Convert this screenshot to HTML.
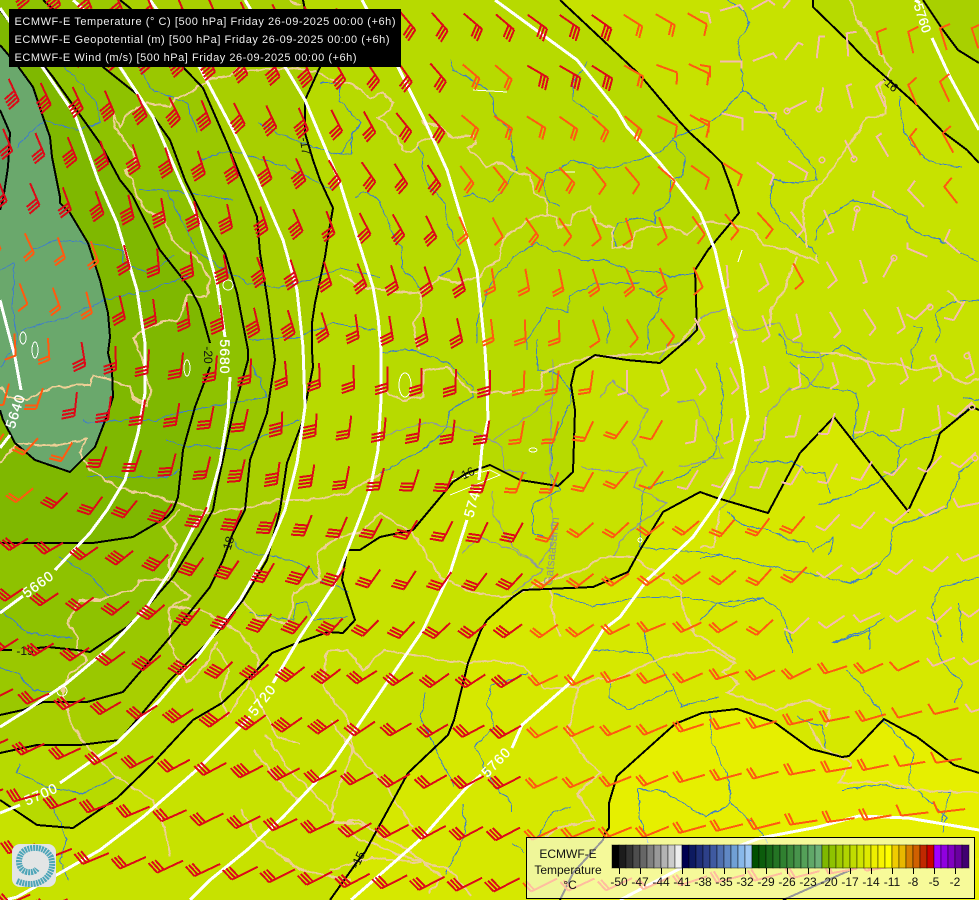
<!DOCTYPE html>
<html><head><meta charset="utf-8"><title>ECMWF-E 500 hPa</title>
<style>
html,body{margin:0;padding:0;background:#c8e300;width:979px;height:900px;overflow:hidden}
svg{display:block;font-family:"Liberation Sans",sans-serif}
.blk{fill:none;stroke:#000;stroke-width:2}
.wht{fill:none;stroke:#fff;stroke-width:3}
.tan{fill:none;stroke:#edcf95;stroke-width:2}
.riv{fill:none;stroke:#4180c4;stroke-width:1}
.gry{fill:none;stroke:#8d9a9c;stroke-width:1.2}
.lk{fill:none;stroke:#fff;stroke-width:1}
.wl{fill:#fff;font-size:14px;letter-spacing:1px;stroke:#fff;stroke-width:.3;text-anchor:middle}
.bl{fill:#111;font-size:12px;text-anchor:middle}
.tt{fill:#eee;font-size:11px}
.lg{fill:#111;font-size:12px;text-anchor:middle}
</style></head><body>
<svg id="m" xmlns="http://www.w3.org/2000/svg" width="979" height="900" viewBox="0 0 979 900">
<defs>
<filter id="w" filterUnits="userSpaceOnUse" x="0" y="0" width="979" height="900" color-interpolation-filters="sRGB">
<feTurbulence type="fractalNoise" baseFrequency=".11" numOctaves="2" seed="4"/>
<feDisplacementMap in="SourceGraphic" scale="5" xChannelSelector="R" yChannelSelector="G"/>
</filter>
</defs>
<g shape-rendering="crispEdges">
<rect width="979" height="900" fill="#d6e800"/>
<polygon fill="#c7e200" points="330,900 357,862 365,852 408,773 448,735 454,720 468,663 481,630 487,620 513,597 523,590 593,587 628,572 640,550 663,512 700,492 717,498 768,513 800,453 834,417 908,511 932,460 940,433 972,407 979,410 979,0 0,0 0,900"/>
<polygon fill="#e6ef00" points="560,900 573,873 603,840 605,833 609,828 609,803 617,776 675,724 702,713 737,709 774,722 811,749 842,757 849,756 884,719 917,737 954,765 979,773 979,900"/>
<polygon fill="#ecf200" points="783,900 855,868 979,858 979,900"/>
<polygon fill="#b7da00" points="0,800 37,825 73,828 117,798 153,763 193,720 222,703 257,670 272,653 297,643 328,632 343,633 355,620 342,580 347,550 360,550 380,537 413,530 453,482 467,473 490,465 520,480 558,486 573,472 575,410 571,385 575,368 595,355 627,360 660,363 687,340 697,330 695,270 708,250 739,213 732,190 722,163 712,153 690,133 678,120 640,75 560,0 0,0"/>
<polygon fill="#b7da00" points="813,0 813,7 847,40 863,57 880,72 917,105 943,132 967,150 979,163 979,0"/>
<polygon fill="#a8d000" points="923,0 943,30 958,50 979,63 979,0"/>
<polygon fill="#a8cf00" points="303,0 305,10 322,60 320,67 305,100 305,133 313,160 320,180 333,208 328,237 325,257 315,303 312,323 312,350 313,367 307,397 302,423 287,463 280,510 267,560 243,600 217,633 170,680 120,740 80,745 37,745 0,753 0,0"/>
<polygon fill="#9ac800" points="120,0 130,8 183,67 203,88 227,143 242,180 257,217 260,253 268,303 275,360 267,413 250,460 245,510 233,533 223,560 210,587 170,637 123,692 87,702 43,702 23,710 0,715 0,0"/>
<polygon fill="#8ec200" points="43,0 52,8 103,67 138,95 170,140 185,180 203,217 225,253 237,293 248,350 248,360 233,413 217,487 213,510 200,533 173,577 147,607 127,627 90,652 77,650 48,647 37,648 0,650 0,0"/>
<polygon fill="#7fb800" points="0,10 53,77 100,143 120,180 132,195 160,250 190,288 200,307 210,343 210,367 195,407 183,450 178,497 173,510 167,517 133,537 93,543 47,543 0,543"/>
<polygon fill="#6aa86c" points="0,45 17,65 33,87 43,117 50,137 52,157 60,197 60,203 70,213 88,243 100,280 108,313 110,337 108,353 112,370 113,397 108,413 95,447 70,472 35,460 15,443 3,420 0,410"/>
<polygon fill="#5f9f64" points="0,110 10,133 8,167 3,200 0,210"/>

<g filter="url(#w)">
<!-- rivers -->
<g class="riv">
<polyline points="728,0 743,10 750,23 738,40 742,67 743,90 723,113 700,128 673,138 663,150 647,157 613,167 603,168 570,160 560,170 547,173 543,185 550,203 560,207"/>
<polyline points="743,90 767,110 780,127 800,150 815,170 817,180 793,183 773,180 770,203 780,220 803,240 818,257"/>
<polyline points="815,240 817,230 827,217 853,200 887,208 907,217 910,230 940,240 970,258 979,262"/>
<polyline points="900,97 902,122 910,143 930,162 962,167"/>
<polyline points="0,270 15,263 12,307 18,340 0,367"/>
<polyline points="33,250 57,240 90,243 123,250 123,263 150,273 175,255"/>
<polyline points="20,330 60,320 105,300 150,290 190,275"/>
<polyline points="83,420 87,423 133,420 157,420 173,413 233,403 267,397 260,380 250,365"/>
<polyline points="167,440 187,447 200,445 240,450 267,433 300,420"/>
<polyline points="87,477 133,477 167,477 180,470"/>
<polyline points="250,340 300,337 333,323 377,330"/>
<polyline points="143,190 167,190 197,252 220,267 247,283 277,287 310,280 340,268 380,277"/>
<polyline points="65,67 97,103 100,123 77,130 43,120 17,147"/>
<polyline points="140,67 152,90 187,103 197,133"/>
<polyline points="257,123 293,140 340,155 360,123 340,100 340,83 320,83"/>
<polyline points="200,160 230,150 287,167 333,190"/>
<polyline points="140,190 167,190 233,200"/>
<polyline points="233,543 247,553 263,555 293,560 310,570 323,583 350,592"/>
<polyline points="250,613 263,615 293,620 297,603 307,603 313,620 347,617"/>
<polyline points="0,667 17,673 33,690 53,693"/>
<polyline points="20,763 17,773 47,787 83,793 117,777"/>
<polyline points="60,557 87,573 110,597"/>
<polyline points="0,610 27,633 73,638"/>
<polyline points="50,800 67,840 60,860 68,880"/>
<polyline points="450,60 453,70 480,85 493,97 493,113 510,130 512,153 517,170 500,193 490,203 473,192 463,197"/>
<polyline points="588,62 573,83 573,100 597,117"/>
<polyline points="673,140 685,157 682,177 670,180 670,203 655,213 655,223 637,218 617,223 613,237 617,247"/>
<polyline points="340,100 360,123 352,135 352,153 340,155"/>
<polyline points="417,145 423,155 422,167 427,183 445,203 448,227 460,250 457,263 440,277"/>
<polyline points="355,197 363,192 377,197 383,210 395,240 402,247 402,267 420,287"/>
<polyline points="697,273 670,277 663,273 637,270 633,272 603,260 580,260 567,253 553,252 537,242 513,257 507,267 497,273 487,292 477,323 477,343"/>
<polyline points="640,283 600,283 570,295 567,312 547,308 540,320 527,340 527,350"/>
<polyline points="640,288 662,298 657,313 648,327 647,350"/>
<polyline points="603,307 610,323 607,343"/>
<polyline points="380,353 413,350 447,363 473,387 473,397 450,410 447,427 423,450 380,473"/>
<polyline points="537,340 537,370 557,373 573,393 553,443 550,473 560,490 533,503 533,533 553,540"/>
<polyline points="717,363 723,390 720,427 713,457 680,477 660,483 643,490 640,547 680,550 722,555"/>
<polyline points="553,593 593,607 637,597 687,597 733,607 763,598 780,610 793,643"/>
<polyline points="935,313 953,302 979,300"/><polyline points="935,313 940,332 937,343"/>
<polyline points="912,327 923,328 912,350 912,368"/>
<polyline points="780,333 787,353 800,358 823,357 843,345 867,360"/>
<polyline points="790,362 813,385 857,393 857,407 853,440 873,430 900,447 897,470 867,487 840,498 818,505"/>
<polyline points="900,447 940,433 970,408"/><polyline points="963,398 979,400"/>
<polyline points="750,462 793,462 807,473 825,473 830,493"/>
<polyline points="975,460 960,473 947,508 893,527 890,553 867,577 850,583 817,575 747,562 722,555 700,558"/>
<polyline points="727,512 743,525 767,530 793,540 808,543 813,552 833,538 828,555"/>
<polyline points="700,620 717,603 763,598"/>
<polyline points="979,577 940,587 932,607 940,637"/><polyline points="958,603 963,643"/>
<polyline points="833,642 870,628 870,650"/><polyline points="870,628 885,618"/>
<polyline points="644,630 648,653 661,667 673,687 681,707 718,697"/>
<polyline points="594,650 648,653"/>
<polyline points="611,680 609,697 628,710 673,690"/>
<polyline points="710,713 712,743 727,773 731,803 706,817 661,790 638,790 640,817 648,843"/>
<polyline points="731,803 760,830 768,843"/>
<polyline points="832,643 871,630"/>
<polyline points="847,670 880,710 884,720 913,753 909,783 946,817 942,833"/>
<polyline points="933,630 942,663 962,683 954,703"/>
<polyline points="785,630 793,653"/>
<polyline points="797,717 822,727 826,750"/>
<polyline points="842,790 875,785 950,793 942,823"/>
<polyline points="425,693 421,717 433,743 454,787"/>
<polyline points="528,673 491,687 487,703 495,727 475,747 495,787 512,803 512,813"/>
<polyline points="462,803 466,833 446,873"/>
<polyline points="537,837 553,812 570,807"/>
<polyline points="512,843 524,852"/>
</g>
<!-- grey admin -->
<g class="gry">
<polyline points="380,437 423,423 473,430 503,447 503,470 527,473"/>
<polyline points="493,440 523,420 557,393"/>
<polyline points="580,467 623,473 643,467 633,487 667,503 623,537 613,557"/>
<polyline points="600,397 613,380 647,410 633,443 647,467"/>
<polyline points="680,467 723,457 693,400 677,402"/>
<polyline points="493,490 493,513 513,547 540,567"/>
<polyline points="462,553 480,537 513,550 543,570 513,593"/>
<polyline points="553,360 550,470 553,540 540,565"/>
<polyline points="780,323 787,340 802,343 803,353 820,353 823,368 807,388 787,390 773,407 765,417 763,438 753,453 740,477 733,497 720,510"/>
<polyline points="700,318 727,308 742,332 780,323"/>
<polyline points="660,360 667,345 690,340 700,318"/>
</g>
<!-- borders -->
<g class="tan">
<polyline points="113,113 120,127 127,113 140,107 147,103 170,107 175,98 190,93 203,83 213,78 230,77 237,70 250,70 290,68 317,72 333,80 352,85 363,92 370,98 383,93 393,102 390,110 378,118 387,125 397,137 403,150 412,152 420,142 433,138 423,122 440,127 453,138 473,135 477,143 468,148 478,158 487,167 497,162 517,173 530,175 533,193 545,198 549,215 557,217 558,227 570,225 573,215 590,207 597,223 613,228 612,247 630,248 635,233 648,227 673,227 687,235 697,225 713,222 733,225 753,230 763,245 780,248 818,262 816,255"/>
<polyline points="549,215 533,217 520,227 503,238 500,260 487,267 480,277 457,283 440,278 420,293 403,292 383,290 360,287 340,275"/>
<polyline points="420,293 422,310 413,323 415,337 420,350"/>
<polyline points="290,0 300,5"/>
<polyline points="113,113 115,127 123,140 133,150 135,163 125,170 132,180 137,197 147,213 163,217 173,240 183,250 197,257 210,280 207,297 187,295 183,310 177,320 157,323 133,338 143,357 145,375 152,390 147,407 133,397 130,387 110,380 93,375 90,385 52,387 43,392 27,400 7,397 0,387"/>
<polyline points="0,463 17,443 37,445 57,445 87,440 80,453 90,470 117,487 150,495 177,503 207,513 250,507 277,500 310,500 347,493 380,473"/>
<polyline points="180,510 163,527 177,543 170,560 170,580 140,580 133,590 100,600 80,600 68,623 78,637 77,650 87,660 80,667 70,673 63,690 70,723 90,750 117,777 153,800 163,823 170,857"/>
<polyline points="170,580 190,597 170,607 170,643 180,667 188,683 207,663 217,643"/>
<polyline points="170,607 200,610 240,633 260,660 253,677 233,707 227,717"/>
<polyline points="217,647 230,670 220,693 227,713"/>
<polyline points="250,687 267,717 277,737 300,743"/>
<polyline points="253,750 287,790 300,800"/>
<polyline points="265,735 290,770 310,790 335,815"/>
<polyline points="243,600 257,617 287,623 293,607 293,593 320,580 317,553 333,540 363,530 380,513 413,533 440,577 473,593 513,597 540,583 583,570 600,557 633,557 680,590 683,610 697,637"/>
<polyline points="327,650 323,687 347,717 353,750 347,767 333,803 333,823 350,823 370,827"/>
<polyline points="327,650 347,650 363,670 384,650 442,660 466,663 495,660 524,667 545,688 578,687 568,733 586,760 601,773 578,793 594,820 561,827 545,837"/>
<polyline points="330,823 359,820 380,837 404,847 442,877 429,893"/><polyline points="330,870 371,857 421,863"/>
<polyline points="330,720 355,753 384,783 413,827"/>
<polyline points="578,687 599,677 611,682 661,657 714,650 735,663 723,673 739,683 727,693 760,703 776,710 809,700 830,710 826,727"/>
<polyline points="809,723 822,747 851,763 838,783 884,782 917,790 978,793"/>
<polyline points="690,630 735,660"/>
<polyline points="380,390 403,400 423,397 423,370 447,367 470,392 513,392 540,390 543,373 560,365 590,357 627,355 657,353 680,343 700,318"/>
<polyline points="550,590 553,613 560,637"/>
<polyline points="820,353 837,353 867,362 900,365 917,370 940,365 960,383 979,380"/>
<polyline points="770,327 772,307 783,293"/><polyline points="947,292 963,305"/>
<polyline points="720,510 713,547 700,547"/>
<polyline points="797,257 783,293"/>
<polyline points="803,203 827,177 857,133 867,118 885,115 885,103 880,87 890,70 873,40 857,20 850,0"/>
<polyline points="803,203 807,247"/>
<polyline points="240,810 260,840 300,870 350,880"/>
<polyline points="340,830 400,855 450,870 470,895"/>
</g>
</g>
<!-- lakes -->
<g class="lk">
<ellipse cx="23" cy="338" rx="3" ry="6"/><ellipse cx="35" cy="350" rx="3" ry="8"/><ellipse cx="187" cy="368" rx="3" ry="8"/>
<ellipse cx="405" cy="385" rx="6" ry="12"/><ellipse cx="533" cy="450" rx="4" ry="2"/><ellipse cx="228" cy="285" rx="5" ry="5"/>
<ellipse cx="640" cy="540" rx="2" ry="2"/><ellipse cx="62" cy="691" rx="5" ry="5"/><polyline points="450,480 490,470 500,475 450,495"/>
<polyline points="742,250 738,262"/><polyline points="565,172 575,172"/><polyline points="473,90 507,92"/>
</g>
<!-- temperature contours -->
<g class="blk">
<polyline points="330,900 357,862 365,852 408,773 448,735 454,720 468,663 481,630 487,620 513,597 523,590 593,587 628,572 640,550 663,512 700,492 717,498 768,513 800,453 834,417 908,511 932,460 940,433 972,407 979,410"/>
<polyline points="560,900 573,873 603,840 605,833 609,828 609,803 617,776 675,724 702,713 737,709 774,722 811,749 842,757 849,756 884,719 917,737 954,765 979,773"/>
<polyline points="783,900 855,868"/>
<polyline points="0,800 37,825 73,828 117,798 153,763 193,720 222,703 257,670 272,653 297,643 328,632 343,633 355,620 342,580 347,550 360,550 380,537 413,530 453,482 467,473 490,465 520,480 558,486 573,472 575,410 571,385 575,368 595,355 627,360 660,363 687,340 697,330 695,270 708,250 739,213 732,190 722,163 712,153 690,133 678,120 640,75 560,0"/>
<polyline points="813,0 813,7 847,40 863,57 880,72 917,105 943,132 967,150 979,163"/>
<polyline points="923,0 943,30 958,50 979,63"/>
<polyline points="303,0 305,10 322,60 320,67 305,100 305,133 313,160 320,180 333,208 328,237 325,257 315,303 312,323 312,350 313,367 307,397 302,423 287,463 280,510 267,560 243,600 217,633 170,680 120,740 80,745 37,745 0,753"/>
<polyline points="120,0 130,8 183,67 203,88 227,143 242,180 257,217 260,253 268,303 275,360 267,413 250,460 245,510 233,533 223,560 210,587 170,637 123,692 87,702 43,702 23,710 0,715"/>
<polyline points="43,0 52,8 103,67 138,95 170,140 185,180 203,217 225,253 237,293 248,350 248,360 233,413 217,487 213,510 200,533 173,577 147,607 127,627 90,652 77,650 48,647 37,648"/><polyline points="12,650 0,650"/>
<polyline points="0,10 53,77 100,143 120,180 132,195 160,250 190,288 200,307 210,343"/><polyline points="210,367 195,407 183,450 178,497 173,510 167,517 133,537 93,543 47,543 0,543"/>
<polyline points="0,45 17,65 33,87 43,117 50,137 52,157 60,197 60,203 70,213 88,243 100,280 108,313 110,337 108,353 112,370 113,397 108,413 95,447 70,472 35,460 15,443 3,420 0,410"/>
<polyline points="0,110 10,133 8,167 3,200 0,210"/>
</g>
<!-- geopotential -->
<g class="wht">
<polyline points="0,300 7,327 15,357 21,390"/><polyline points="10,435 0,448"/>
<polyline points="0,8 43,68 75,115 98,180 117,223 137,290 145,343 145,393 138,433 125,480 107,510 90,533 55,570"/><polyline points="23,596 0,613"/>
<polyline points="73,0 82,8 120,67 153,117 180,180 200,223 217,283 225,337"/><polyline points="230,377 228,413 220,463 207,510 193,528 173,567 147,607 110,647 67,683 27,710 0,727"/>
<polyline points="150,0 200,68 233,130 257,180 283,240 297,290 303,347 305,407 297,463 285,510 267,553 240,600 200,653 160,700 117,743 60,783"/><polyline points="20,805 0,813"/>
<polyline points="245,0 287,70 305,100 340,183 357,237 373,287 378,317 381,350 381,400 378,450 370,490 363,510 333,587 300,637 273,683"/><polyline points="250,717 200,767 143,817 100,850 60,873 17,897 5,900"/>
<polyline points="362,0 398,67 423,117 447,170 460,213 477,270 485,350 487,383 488,420 482,447 479,480"/><polyline points="467,520 450,573 423,630 384,687 330,767 283,817 247,850 210,880 190,900"/>
<polyline points="495,0 577,60 617,110 627,127 660,163 700,213 715,250 724,290 733,330 742,367 748,417 733,473 717,503 693,537 647,580 620,617 603,630 570,683 522,725 512,748"/><polyline points="481,775 466,788 423,837 351,900"/>
<polyline points="932,38 950,77 979,130"/><polyline points="915,0 920,3"/>
<polyline points="620,900 681,868 760,838 818,827 859,816 908,818 979,830"/>
</g>
</g>
<text class="bl" transform="translate(208,355) rotate(90)" dy="4">-20</text>
<text class="bl" transform="translate(228,545) rotate(-72)" dy="4">-18</text>
<text class="bl" x="25" y="655">-19</text>
<text class="bl" transform="translate(466,474) rotate(-25)" dy="4">-16</text>
<text class="bl" transform="translate(890,84) rotate(42)" dy="4">-16</text>
<text class="bl" transform="translate(305,146) rotate(82)" dy="4">-17</text>
<text class="bl" transform="translate(358,860) rotate(-65)" dy="4">-15</text>
<text fill="#8a9294" font-size="12" transform="translate(552,586) rotate(-84)">Gatsaasarun</text>
<text class="wl" transform="translate(15,411) rotate(-72)" dy="5">5640</text>
<text class="wl" transform="translate(38,584) rotate(-36)" dy="5">5660</text>
<text class="wl" transform="translate(225,357) rotate(90)" dy="5">5680</text>
<text class="wl" transform="translate(41,794) rotate(-24)" dy="5">5700</text>
<text class="wl" transform="translate(262,700) rotate(-52)" dy="5">5720</text>
<text class="wl" transform="translate(473,500) rotate(-74)" dy="5">5740</text>
<text class="wl" transform="translate(496,762) rotate(-46)" dy="5">5760</text>
<text class="wl" transform="translate(923,18) rotate(72)" dy="5" style="font-size:13px;letter-spacing:.3px">5760</text>
<g id="barbs" fill="none" stroke-width="2" shape-rendering="crispEdges"></g>

<!-- title -->
<rect x="9" y="9" width="392" height="58" fill="#000"/>
<text class="tt" x="14.5" y="25" textLength="381" lengthAdjust="spacing">ECMWF-E Temperature (° C) [500 hPa] Friday 26-09-2025 00:00 (+6h)</text>
<text class="tt" x="14.5" y="43" textLength="375" lengthAdjust="spacing">ECMWF-E Geopotential (m) [500 hPa] Friday 26-09-2025 00:00 (+6h)</text>
<text class="tt" x="14.5" y="61" textLength="342" lengthAdjust="spacing">ECMWF-E Wind (m/s) [500 hPa] Friday 26-09-2025 00:00 (+6h)</text>

<!-- logo -->
<rect x="12" y="844" width="44" height="43" rx="8" fill="#e2e5e5"/>
<path d="M17 881Q33 888 45 879Q55 870 51 857Q45 847 33 848Q20 849 19 861Q19 870 27 872Q34 873 37 869" fill="none" stroke="#4da5b8" stroke-width="6" stroke-dasharray="2 .8"/>

<!-- legend -->
<rect x="526.500" y="837.500" width="448" height="61" fill="#fff" fill-opacity=".6" stroke="#000"/>
<g stroke="#000" stroke-opacity=".45" stroke-width="1">
<rect x="612" y="845" width="7" height="23" fill="#000"/><rect x="619" y="845" width="7" height="23" fill="#1c1c1c"/><rect x="626" y="845" width="7" height="23" fill="#333"/><rect x="633" y="845" width="7" height="23" fill="#4d4d4d"/><rect x="640" y="845" width="7" height="23" fill="#666"/><rect x="647" y="845" width="7" height="23" fill="#808080"/><rect x="654" y="845" width="7" height="23" fill="#999"/><rect x="661" y="845" width="7" height="23" fill="#b3b3b3"/><rect x="668" y="845" width="7" height="23" fill="#ccc"/><rect x="675" y="845" width="7" height="23" fill="#eee"/>
<rect x="682" y="845" width="7" height="23" fill="#00004f"/><rect x="689" y="845" width="7" height="23" fill="#0d1a60"/><rect x="696" y="845" width="7" height="23" fill="#1f2f78"/><rect x="703" y="845" width="7" height="23" fill="#2d4089"/><rect x="710" y="845" width="7" height="23" fill="#3f5aa0"/><rect x="717" y="845" width="7" height="23" fill="#4f70b0"/><rect x="724" y="845" width="7" height="23" fill="#6088c4"/><rect x="731" y="845" width="7" height="23" fill="#70a0d4"/><rect x="738" y="845" width="7" height="23" fill="#88b8ea"/><rect x="745" y="845" width="7" height="23" fill="#a0c8f4"/>
<rect x="752" y="845" width="7" height="23" fill="#004f00"/><rect x="759" y="845" width="7" height="23" fill="#0c5c0c"/><rect x="766" y="845" width="7" height="23" fill="#186818"/><rect x="773" y="845" width="7" height="23" fill="#247424"/><rect x="780" y="845" width="7" height="23" fill="#308030"/><rect x="787" y="845" width="7" height="23" fill="#3c8a3c"/><rect x="794" y="845" width="7" height="23" fill="#48944c"/><rect x="801" y="845" width="7" height="23" fill="#54a058"/><rect x="808" y="845" width="7" height="23" fill="#60a868"/><rect x="815" y="845" width="7" height="23" fill="#6cb078"/>
<rect x="822" y="845" width="7" height="23" fill="#7fb800"/><rect x="829" y="845" width="7" height="23" fill="#8ec200"/><rect x="836" y="845" width="7" height="23" fill="#a0ca00"/><rect x="843" y="845" width="7" height="23" fill="#b0d400"/><rect x="850" y="845" width="7" height="23" fill="#c0dc00"/><rect x="857" y="845" width="7" height="23" fill="#cee400"/><rect x="864" y="845" width="7" height="23" fill="#deea00"/><rect x="871" y="845" width="7" height="23" fill="#eeef00"/><rect x="878" y="845" width="7" height="23" fill="#f8f400"/><rect x="885" y="845" width="7" height="23" fill="#ffff00"/>
<rect x="892" y="845" width="7" height="23" fill="#f0cc00"/><rect x="899" y="845" width="7" height="23" fill="#e8b800"/><rect x="906" y="845" width="7" height="23" fill="#d88000"/><rect x="913" y="845" width="7" height="23" fill="#d06000"/><rect x="920" y="845" width="7" height="23" fill="#c02800"/><rect x="927" y="845" width="7" height="23" fill="#cc0000"/>
<rect x="934" y="845" width="7" height="23" fill="#a000ff"/><rect x="941" y="845" width="7" height="23" fill="#9000e0"/><rect x="948" y="845" width="7" height="23" fill="#8000c0"/><rect x="955" y="845" width="7" height="23" fill="#6a00a0"/><rect x="962" y="845" width="7" height="23" fill="#400070"/>
</g>
<path d="M619.500 868v6M640.500 868v6M661.500 868v6M682.500 868v6M703.500 868v6M724.500 868v6M745.500 868v6M766.500 868v6M787.500 868v6M808.500 868v6M829.500 868v6M850.500 868v6M871.500 868v6M892.500 868v6M913.500 868v6M934.500 868v6M955.500 868v6" stroke="#000" fill="none"/>
<g class="lg">
<text x="568" y="858">ECMWF-E</text><text x="568" y="874">Temperature</text><text x="570" y="889">°C</text>
<text x="619" y="886">-50</text><text x="640" y="886">-47</text><text x="661" y="886">-44</text><text x="682" y="886">-41</text><text x="703" y="886">-38</text><text x="724" y="886">-35</text><text x="745" y="886">-32</text><text x="766" y="886">-29</text><text x="787" y="886">-26</text><text x="808" y="886">-23</text><text x="829" y="886">-20</text><text x="850" y="886">-17</text><text x="871" y="886">-14</text><text x="892" y="886">-11</text><text x="913" y="886">-8</text><text x="934" y="886">-5</text><text x="955" y="886">-2</text>
</g>
</svg>
<script>
(function(){
var A=[[30,185,67],[63,188,70],[100,190,70],[130,195,77],[163,198,80],[197,200,78],[229,203,78],[262,205,72],[295,207,67],[328,209,70],
[25,237,65],[58,239,71],[92,243,70],[125,247,76],[160,250,85],[193,252,83],[227,254,80],[258,257,70],[292,258,72],[325,260,72],
[20,287,69],[53,290,70],[87,293,75],[121,297,77],[154,300,83],[188,302,83],[222,305,83],[256,307,77],[289,309,73],[323,311,73],
[15,337,86],[48,341,86],[82,344,81],[116,348,88],[150,350,94],[184,353,96],[218,356,95],[252,358,92],[287,361,85],[321,363,88],[354,364,88],
[9,388,105],[43,392,108],[77,395,96],[112,398,97],[147,402,99],[180,404,99],[215,407,101],[249,409,102],[284,412,92],[318,413,94],[353,414,97],
[37,443,132],[73,447,121],[107,449,110],[143,453,108],[177,456,104],[212,457,103],[247,460,103],[281,463,97],[315,465,99],[351,465,101],
[33,493,141],[68,497,135],[103,500,126],[138,503,129],
[28,545,148],[63,548,150],[99,552,145],[135,555,141],[168,557,132],[203,560,126],[240,562,124],[275,563,120],[310,567,122],[345,569,124],
[58,600,146],[95,602,143],[130,605,141],[166,608,139],[202,610,129],[237,613,126],[272,615,126],[308,617,129],[343,618,132],[380,620,135],
[55,650,148],[90,653,146],[125,657,144],[162,658,140],[198,662,138],[233,664,136],[270,667,140],[306,668,142],[342,670,143],[380,673,148],
[50,702,155],[85,705,152],[122,708,150],[158,710,148],[195,713,147],[231,715,144],[268,717,144],[303,718,145],[339,721,146],[377,722,146],
[45,752,155],[82,755,155],[117,758,152],[154,762,153],[191,763,152],[228,766,152],[265,768,153],[301,770,153],[337,772,153],[374,773,152],
[40,803,164],[77,805,158],[114,808,159],[151,812,157],[188,814,156],[224,817,154],[262,818,154],[298,821,155],[337,823,155],[372,823,150],[200,870,155],
[402,8,50],[402,63,55],[365,110,64],[333,108,63],[302,106,67],[267,103,65],[235,102,63],[203,99,68],[172,97,63],[107,90,67],[73,87,65],[42,84,65],
[463,63,40],[495,63,40],[527,63,30],[560,63,30],[592,63,32],[625,63,30],[657,63,20],[690,62,25],[480,10,40],[590,10,35],[660,10,30],
[364,109,54],[397,110,51],[430,112,49],[463,113,40],[495,113,35],[527,114,32],[560,114,35],[592,113,42],[625,114,39],[657,113,27],[690,113,30],
[362,160,55],[396,161,58],[428,162,57],[462,163,53],[494,164,51],[527,165,40],[560,166,46],[592,165,52],[625,165,50],[658,163,41],[690,163,35],[725,163,38],
[360,210,63],[393,213,61],[427,213,64],[459,214,67],[493,215,62],[527,216,55],[559,217,56],[592,215,67],[626,216,72],[658,215,69],[690,215,55],[725,214,51],[758,213,51],
[358,262,68],[392,263,73],[425,264,71],[458,265,73],[493,266,81],[526,266,80],[559,267,78],[593,267,72],[626,267,68],[659,266,71],[692,265,65],[727,265,85],[760,263,68],[793,263,61],[827,262,61],[860,260,73],[894,258,118],[927,257,120],[960,253,130],
[357,312,82],[390,314,81],[424,315,79],[457,316,77],[492,317,83],[525,317,88],[559,317,88],[593,317,72],[627,317,59],[660,317,52],[692,318,62],[730,317,65],[762,315,70],[796,314,77],[828,313,61],[863,311,57],[897,309,70],[930,307,137],[965,305,120],
[388,365,90],[423,367,90],[457,367,91],[491,368,91],[525,368,92],[559,368,96],[593,368,98],[628,368,90],[662,367,70],[695,368,62],[728,367,66],[763,366,78],[798,364,84],[832,363,74],[866,362,67],[900,360,70],[933,358,72],[967,356,75],
[387,417,95],[422,417,96],[456,418,97],[490,419,99],[525,420,100],[559,420,104],[593,420,115],[628,420,126],[662,422,120],[697,420,95],[731,418,86],[766,417,95],[800,417,104],[834,416,108],[868,413,104],[903,411,99],[937,408,83],[972,407,137],
[420,468,108],[454,470,110],[488,470,108],[524,471,110],[558,471,110],[593,471,119],[628,471,130],[663,471,126],[697,471,121],[730,471,123],[767,467,112],[802,467,121],[837,466,117],[871,465,121],[907,462,130],[942,458,132],[975,458,137],
[418,520,121],[453,520,117],[488,522,115],[523,522,119],[558,522,121],[594,522,139],[629,522,137],[665,520,142],[699,521,140],[734,520,130],[769,519,127],[805,518,130],[839,516,133],[874,514,131],[910,512,139],[945,510,153],[979,507,169],
[417,570,123],[452,570,125],[487,572,127],[523,572,133],[558,572,139],[594,573,142],[628,572,145],[665,572,145],[700,572,146],[736,570,140],[771,569,132],[807,568,135],[842,567,144],[877,565,148],[913,564,138],[948,561,137],[979,558,159],
[415,620,133],[451,622,137],[487,623,141],[522,624,144],[558,624,145],[594,624,147],[630,624,153],[665,624,158],[701,624,155],[737,622,150],[773,620,137],[809,619,136],[845,618,146],[880,617,156],[916,615,148],[952,612,137],
[413,677,147],[485,677,147],[557,677,155],[630,677,162],[743,677,162],[847,677,162],[950,677,160],
[413,730,150],[485,730,152],[630,730,157],[743,730,165],[842,730,169],[950,730,168],
[413,780,150],[485,780,152],[557,780,155],[630,780,158],[740,780,165],[842,780,170],[950,780,172],
[413,830,152],[485,830,152],[630,830,158],[745,830,166],[842,830,172],[950,830,174],
[413,885,153],[485,885,153],[630,885,155],[800,885,165],[950,885,170]];
var S=[[10,250,1.5],[10,350,1.5],[20,420,1.7],[30,470,1.7],[60,190,3],[30,190,2.6],[100,190,4],[55,240,2.2],[85,300,2.4],[50,340,2],[82,345,2.6],[115,350,3],[150,360,3],[15,425,1.5],[75,400,2.5],[105,400,3],
[30,100,3.5],[100,100,4],[200,100,4],[300,100,4],[350,170,3.5],[250,170,4],[150,170,4],[250,260,4],[150,260,3.5],[330,260,3.5],[330,320,3.5],[230,320,3.5],[300,370,3.5],[200,380,3],[300,430,4],[200,430,3],[250,480,4],[100,480,3],[200,530,4],[50,530,3],[300,570,4],[100,570,3.5],[300,680,4],[100,680,3.5],[100,760,3.5],[150,830,3],[300,880,3],[350,760,3.5],
[380,63,3],[402,63,3],[433,60,2.6],[463,63,2],[495,63,2],[527,63,2.6],[560,63,2.6],[592,63,2.6],[625,63,2],[657,63,1.5],[690,62,1.5],[480,10,2.6],[590,10,2.6],
[364,110,3],[397,110,3],[430,112,2.6],[463,113,2],[495,113,2],[527,114,2],[560,114,2],[592,113,2],[625,114,2],[657,113,1.5],[690,113,1.5],
[362,160,3],[396,161,2.6],[428,162,2.6],[462,163,2],[495,164,2],[527,165,2],[560,166,2],[592,165,1.5],[625,165,1.5],[657,163,1.5],[690,163,1.5],
[358,214,3],[393,213,3],[427,213,2.6],[459,214,2],[493,215,1.5],[527,216,2],[560,217,1.5],[592,215,1.5],[625,216,1.5],[660,215,1.5],[692,215,1.5],
[358,264,3],[392,263,3],[425,264,3],[458,265,2.6],[493,266,2],[527,266,2],[560,267,2],[592,267,2],[625,267,2],[657,266,2],[692,265,1.5],
[357,315,3],[390,314,3],[424,315,3],[457,316,2.6],[492,317,2],[525,317,2],[560,317,2],[592,317,1.5],[627,317,1.5],[660,317,1.5],[692,318,1.1],[730,317,1],
[388,368,3],[423,367,3],[457,367,2.6],[491,368,2.6],[525,368,2],[559,368,2],[593,368,2],[628,368,1],[662,367,1],[695,368,1],[730,367,1],
[387,420,3],[422,417,3],[456,418,2.6],[490,419,2.6],[525,420,2],[559,420,2],[593,420,2],[628,420,1.6],[662,422,1.6],[697,420,1],[732,418,1],
[420,470,3],[454,470,3],[488,470,3],[524,471,2],[558,471,2],[593,471,2],[628,471,1.6],[663,471,1.6],[697,471,1],[730,471,1],
[418,520,3],[453,520,2.6],[488,522,2.6],[523,522,2.6],[558,522,2],[594,522,2],[629,522,2],[665,520,2],[699,521,2],[734,520,2],[770,519,2],[805,518,2],[839,516,1],[975,507,1],[900,512,1],
[417,570,3],[452,570,2.6],[487,572,2.6],[523,572,2.6],[558,572,2],[594,573,2],[665,572,2],[736,570,2],[771,569,2],[805,568,2],[842,567,1.1],[900,565,1],[979,558,1],
[415,622,3],[451,622,3],[487,623,3],[522,624,2.6],[558,624,2],[594,624,2],[630,624,2],[665,624,2],[701,624,2],[738,622,2],[773,620,2],[809,619,1.1],[880,617,1],[979,612,1],
[413,677,3],[485,677,3],[520,677,3],[557,677,2.4],[630,677,2],[743,677,2],[847,677,2],[925,677,1.6],[950,677,1],[979,677,1],
[413,730,3],[520,730,3],[557,730,2.4],[630,730,2],[800,730,2],[950,730,1.6],
[413,780,3],[520,780,3],[557,780,2.4],[700,780,2],[950,780,1.6],
[413,830,3],[520,830,3],[557,830,2.4],[700,830,2.2],[950,830,1.6],
[413,885,3],[520,885,3],[557,885,2.4],[800,885,2.2],[950,885,1.6],
[796,314,1],[900,310,1],[800,364,1],[900,362,1],[800,417,1],[900,411,1],[800,467,1],[900,465,1],[979,460,1]];
function ang(x,y){var c=0,s=0;for(var i=0;i<A.length;i++){var d=(A[i][0]-x)*(A[i][0]-x)+(A[i][1]-y)*(A[i][1]-y)+1;var w=1/(d*d);var a=A[i][2]*Math.PI/180;c+=w*Math.cos(a);s+=w*Math.sin(a);}return Math.atan2(s,c);}
function spd(x,y){var t=0,q=0;for(var i=0;i<S.length;i++){var d=(S[i][0]-x)*(S[i][0]-x)+(S[i][1]-y)*(S[i][1]-y)+1;var w=1/(d*d*d);t+=w*S[i][2];q+=w;}return t/q;}
var R="",O="",P="";
function f(v){return v.toFixed(1);}
for(var j=0;j<19;j++){for(var n=-18;n<=14;n++){
 var y0=15+50.8*j;var sp=31.9+0.0064*y0;var x=575+(n-0.477)*sp;
 var y=y0-0.00012*(x-570)*(x-570);
 sp=31.9+0.0064*y;x=575+(n-0.477)*sp;y=y0-0.00012*(x-570)*(x-570);
 if(x<-20||x>995||y<-30||y>925)continue;
 if(x>=705&&y<275)continue;
 var a=ang(x,y),s=spd(x,y);
 var L=22+Math.max(0,y-600)*0.025+(s>=2.5&&y<400?2:0),hx=x+L*Math.cos(a),hy=y+L*Math.sin(a);
 var nf=s<1.6?1:(s<2.5?2:(s<3.5?3:4));
 var fa=a+73*Math.PI/180,FL=s<1.25?10:(s<2.5?12:13);
 var d="M"+f(x)+" "+f(y)+"L"+f(hx)+" "+f(hy);
 for(var k=0;k<nf;k++){var bx=hx-k*3.6*Math.cos(a),by=hy-k*3.6*Math.sin(a);
  d+="M"+f(bx)+" "+f(by)+"L"+f(bx+FL*Math.cos(fa))+" "+f(by+FL*Math.sin(fa));}
 if(s<1.25)P+=d;else if(s<2.5)O+=d;else R+=d;
}}
var Z=[["P",0,35,25,40,32,70],["P",60,32,120,15,130,30],["P",155,28,205,0,225,15],["P",250,25,270,0,270,0],["P",350,175,358,110,375,110],["P",255,180,295,128,310,135],["P",158,183,220,160,230,175],["P",60,185,125,185,125,205],["P",445,170,440,100,470,95],["O",545,165,530,97,560,85],["O",640,160,625,95,655,80],["O",740,150,720,85,750,72],["O",835,145,815,85,837,75],["O",0,195,30,200,30,232],["O",0,355,28,365,25,397],
["P",65,340,128,355,128,392],["P",162,335,228,340,225,360],["P",458,325,440,258,455,252],["P",555,320,528,260,545,245],["O",650,315,625,255,650,232],["O",748,305,720,245,748,222],["P",565,470,530,410,545,400],["O",662,465,630,410,650,385],["O",760,458,728,400,752,378],["P",170,487,222,525,210,555],["P",265,483,322,518,315,540],["O",70,490,125,525,113,558],
["P",672,620,625,570,645,542],["O",772,610,733,560,755,533],["P",572,625,518,590,522,572],["P",372,630,400,695,383,703],["P",272,635,312,688,290,712],["O",172,637,218,688,197,716],["O",75,642,115,692,92,720],["P",780,760,735,722,750,688],["P",682,770,622,745,622,727],["P",480,780,500,845,488,850],["P",380,785,410,840,383,865],["O",280,790,310,845,285,868],["P",180,790,205,852,175,875],["P",80,795,85,860,75,865]];
Z.forEach(function(b){var c=function(v,o){return f(v/3+o);};var d="M"+c(b[1],700)+" "+c(b[2],0)+"L"+c(b[3],700)+" "+c(b[4],0)+"L"+c(b[5],700)+" "+c(b[6],0);if(b[0]=="P")P+=d;else O+=d;});
[[260,332,320,302],[358,328,370,262],[463,476,435,420],[472,627,458,692],[581,773,550,832]].forEach(function(b){P+="M"+f(b[0]/3+700)+" "+f(b[1]/3)+"L"+f(b[2]/3+700)+" "+f(b[3]/3);});
var g=document.getElementById("barbs"),NS="http://www.w3.org/2000/svg";
function add(d,col){var p=document.createElementNS(NS,"path");p.setAttribute("d",d);p.setAttribute("stroke",col);g.appendChild(p);}
add(P,"#f6bcb0");add(O,"#ff5a10");add(R,"#dc0a18");
[[787,111],[819,109],[854,159],[857,209],[894,258],[822,160],[930,307],[933,358],[967,356],[972,407],[975,458]].forEach(function(b){var e=document.createElementNS(NS,"circle");e.setAttribute("cx",b[0]);e.setAttribute("cy",b[1]);e.setAttribute("r","2.7");e.setAttribute("stroke","#f6bcb0");e.setAttribute("stroke-width","1.6");g.appendChild(e);});
})();
</script>
</body></html>
